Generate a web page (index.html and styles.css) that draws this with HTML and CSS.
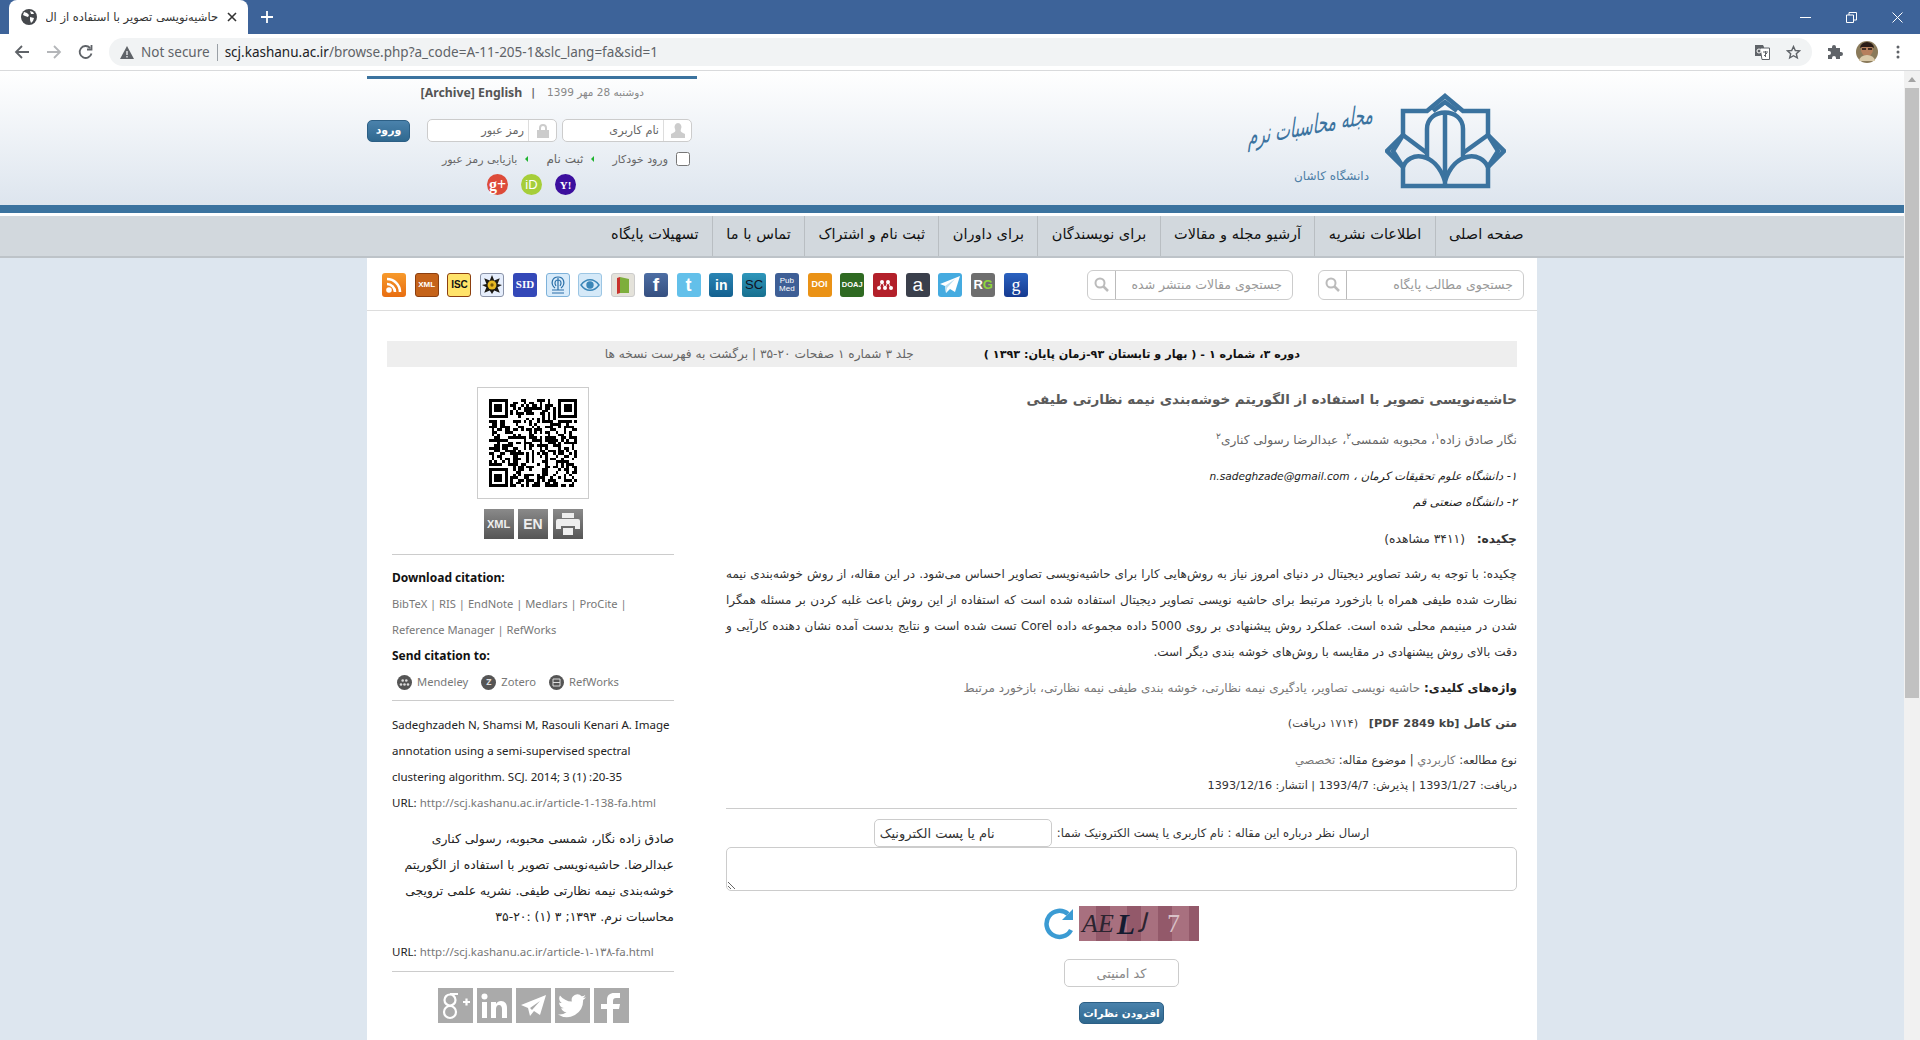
FILE: index.html
```html
<!DOCTYPE html>
<html lang="fa">
<head>
<meta charset="utf-8">
<title>حاشیه‌نویسی تصویر</title>
<link rel="stylesheet" href="styles.css">
</head>
<body>
<div class="tabstrip" dir="ltr">
    <div class="tab">
        <svg class="globe" width="16" height="16" viewBox="0 0 16 16"><circle cx="8" cy="8" r="8" fill="#45484c"/><path d="M3 3l3 1 2 2-1 2-3-1-2-1zM9 8l4 1-1 3-2 2-1-3zM9 2l3 1 1 2-3 0z" fill="#fff"/></svg>
        <span class="tab-title" dir="rtl">حاشیه‌نویسی تصویر با استفاده از ال</span>
        <svg width="10" height="10" viewBox="0 0 10 10"><path d="M1 1l8 8M9 1l-8 8" stroke="#333" stroke-width="1.6"/></svg>
    </div>
    <svg class="newtab" width="12" height="12" viewBox="0 0 12 12"><path d="M6 0v12M0 6h12" stroke="#fff" stroke-width="1.8"/></svg>
    <div class="winbtns">
        <svg width="11" height="11" viewBox="0 0 11 11"><path d="M0 5.5h11" stroke="#fff"/></svg>
        <svg width="11" height="11" viewBox="0 0 11 11"><path d="M.5 3h7v7.500h-7zM3 3V.5h7.500V8H8" fill="none" stroke="#fff"/></svg>
        <svg width="11" height="11" viewBox="0 0 11 11"><path d="M.5.5l10 10M10.500.5l-10 10" stroke="#fff"/></svg>
    </div>
</div>
<div class="toolbar" dir="ltr">
    <svg width="16" height="16" viewBox="0 0 16 16"><path d="M15 8H2M8 2L2 8l6 6" fill="none" stroke="#5f6368" stroke-width="1.800"/></svg>
    <svg width="16" height="16" viewBox="0 0 16 16"><path d="M1 8h13M8 2l6 6-6 6" fill="none" stroke="#b4b6b9" stroke-width="1.800"/></svg>
    <svg width="16" height="16" viewBox="0 0 16 16"><path d="M13.500 9.500A6 6 0 1 1 12 3.800M13.500 1v4.500H9" fill="none" stroke="#5f6368" stroke-width="1.800"/></svg>
    <div class="omnibox">
        <svg width="14" height="13" viewBox="0 0 14 13"><path d="M7 0l7 13H0z" fill="#5f6368"/><path d="M7 5v4M7 10v1.500" stroke="#f1f3f4" stroke-width="1.300"/></svg>
        <span class="insecure">Not secure</span>
        <span class="urlbar-sep"></span>
        <span class="url"><b>scj.kashanu.ac.ir</b>/browse.php?a_code=A-11-205-1&amp;slc_lang=fa&amp;sid=1</span>
        <svg class="translate" width="15" height="15" viewBox="0 0 15 15"><path d="M0 0h8l1 2v9H0z" fill="#5f6368"/><path d="M5 3h9.500v11.500H7z" fill="#fff" stroke="#5f6368"/><circle cx="4" cy="6" r="2" fill="none" stroke="#fff"/><path d="M8 7h5M10.500 6v6M9 11l3-3" stroke="#5f6368" fill="none"/></svg>
        <svg width="15" height="15" viewBox="0 0 15 15"><path d="M7.500 1.500l1.800 4 4.200.4-3.200 2.800 1 4.200-3.800-2.200-3.800 2.200 1-4.200L1.500 5.900l4.200-.4z" fill="none" stroke="#5f6368" stroke-width="1.400"/></svg>
    </div>
    <svg class="puzzle" width="16" height="16" viewBox="0 0 16 16"><path d="M1 4h4V3a2 2 0 0 1 4 0v1h4v4h1a2 2 0 0 1 0 4h-1v3H9v-1a2 2 0 0 0-4 0v1H1v-4h1a2 2 0 0 0 0-4H1z" fill="#5f6368"/></svg>
    <svg class="avatar" width="22" height="22" viewBox="0 0 22 22"><circle cx="11" cy="11" r="11" fill="#8a7a5a"/><circle cx="11" cy="9" r="6" fill="#b67f5c"/><path d="M4 7a7 6 0 0 1 14 0l-2-1H6z" fill="#2a1c16"/><path d="M6 8h4M12 8h4" stroke="#1d1512" stroke-width="1.400"/><path d="M3 20a8 6 0 0 1 16 0z" fill="#d9c9a8"/></svg>
    <svg class="dots" width="4" height="14" viewBox="0 0 4 14"><circle cx="2" cy="2" r="1.500" fill="#5f6368"/><circle cx="2" cy="7" r="1.500" fill="#5f6368"/><circle cx="2" cy="12" r="1.500" fill="#5f6368"/></svg>
</div>
<div class="viewport">
    <div class="page" dir="rtl">
        <header class="masthead">
            <div class="masthead-in">
                <div class="brand">
                    <svg class="emblem" width="121" height="96" viewBox="0 0 121 96" fill="none" stroke="#3b739f" stroke-width="4.500"><path d="M60 3L78 18H103V42L119 58L103 74V93H18V74L2 58L18 42V18H42z"/><path d="M48 18L60 9L72 18M18 42L8 58L18 74M103 42L113 58L103 74"/><path d="M42 66V36C42 14 78 14 78 36V66M60 18V93"/><path d="M18 74C24 58 50 58 60 88C70 58 96 58 103 74"/><path d="M18 42L42 60M103 42L78 60"/></svg>
                    <div class="brand-text">
                        <div class="brand-name">مجله محاسبات نرم</div>
                        <div class="brand-sub">دانشگاه کاشان</div>
                    </div>
                </div>
                <div class="userbox">
                    <div class="topline">
                        <span class="today">دوشنبه 28 مهر 1399</span>
                        <span class="pipe">|</span>
                        <span class="langs" dir="ltr">[Archive] English</span>
                    </div>
                    <div class="loginrow">
                        <div class="field"><span class="field-ic"><svg width="14" height="15" viewBox="0 0 14 15"><path d="M7 0a3.500 4 0 0 1 3 6c-1 2 0 3 2 4l2 1v4H0v-4l2-1c2-1 3-2 2-4a3.500 4 0 0 1 3-6z" fill="#ccc"/></svg></span><span>نام کاربری</span></div>
                        <div class="field"><span class="field-ic"><svg width="12" height="14" viewBox="0 0 12 14"><path d="M3 6V4a3 3 0 0 1 6 0v2" fill="none" stroke="#ccc" stroke-width="2"/><path d="M0 6h12v8H0z" fill="#ccc"/></svg></span><span>رمز عبور</span></div>
                        <div class="btn login-btn">ورود</div>
                    </div>
                    <div class="linksrow">
                        <input type="checkbox">
                        <span>ورود خودکار</span>
                        <i class="arrow"></i><span class="signup">ثبت نام</span>
                        <i class="arrow"></i><span>بازیابی رمز عبور</span>
                    </div>
                    <div class="oauth">
                        <span class="round yahoo" dir="ltr">Y!</span>
                        <span class="round orcid" dir="ltr">iD</span>
                        <span class="round gplus" dir="ltr">g+</span>
                    </div>
                </div>
            </div>
        </header>
        <div class="stripe"></div>
        <nav class="mainnav">
            <div class="mainnav-in">
                <a class="navitem">صفحه اصلی</a>
                <a class="navitem">اطلاعات نشریه</a>
                <a class="navitem">آرشیو مجله و مقالات</a>
                <a class="navitem">برای نویسندگان</a>
                <a class="navitem">برای داوران</a>
                <a class="navitem">ثبت نام و اشتراک</a>
                <a class="navitem">تماس با ما</a>
                <a class="navitem">تسهیلات پایگاه</a>
            </div>
        </nav>
        <main class="sheet">
            <div class="toolrow">
                <div class="search"><span>جستجوی مطالب پایگاه</span><span class="search-ic"><svg width="15" height="15" viewBox="0 0 15 15"><circle cx="6" cy="6" r="4.500" fill="none" stroke="#bbb" stroke-width="2"/><path d="M9.500 9.500l4.500 4.500" stroke="#bbb" stroke-width="2.500"/></svg></span></div>
                <div class="search"><span>جستجوی مقالات منتشر شده</span><span class="search-ic"><svg width="15" height="15" viewBox="0 0 15 15"><circle cx="6" cy="6" r="4.500" fill="none" stroke="#bbb" stroke-width="2"/><path d="M9.500 9.500l4.500 4.500" stroke="#bbb" stroke-width="2.500"/></svg></span></div>
                <div class="badges" dir="ltr">
                    <span class="badge b-rss"><svg width="18" height="18" viewBox="0 0 18 18" fill="none" stroke="#fff" stroke-width="2.600"><circle cx="4" cy="14" r="1.500" fill="#fff"/><path d="M2 8a8 8 0 0 1 8 8M2 3a13 13 0 0 1 13 13"/></svg></span>
                    <span class="badge b-xml">XML</span>
                    <span class="badge b-isc">ISC</span>
                    <span class="badge b-star"><svg width="20" height="20" viewBox="0 0 18 18"><path d="M9 0l2 5 5-2-2 5 4 1-4 2 2 5-5-2-2 3-2-3-5 2 2-5-4-2 4-1-2-5 5 2z" fill="#1c1a14"/><circle cx="9" cy="9" r="4" fill="#e6b820"/><circle cx="9" cy="9" r="1.500" fill="#7a5a08"/></svg></span>
                    <span class="badge b-sid">SID</span>
                    <span class="badge b-ring"><svg width="18" height="20" viewBox="0 0 18 20" fill="none" stroke="#2a6fa8" stroke-width="1.200"><path d="M6 13C1 9 3 2 9 2s8 7 3 11M7 11C5 8 6 5 9 5s4 3 2 6M9 3v12M3 15h12M3 18h12"/></svg></span>
                    <span class="badge b-eye"><svg width="20" height="12" viewBox="0 0 20 12" fill="none" stroke="#3a86b8" stroke-width="1.400"><path d="M1 6c5-7 13-7 18 0-5 7-13 7-18 0z"/><circle cx="10" cy="6" r="3" fill="#3a86b8"/></svg></span>
                    <span class="badge b-book"><svg width="16" height="20" viewBox="0 0 16 20"><path d="M2 3l3-1v16l-3 1z" fill="#c8322c"/><path d="M5 2l9 2v14l-9 0z" fill="#7dae3c"/></svg></span>
                    <span class="badge b-fb">f</span>
                    <span class="badge b-tw">t</span>
                    <span class="badge b-in">in</span>
                    <span class="badge b-sc">SC</span>
                    <span class="badge b-pm">Pub<br>Med</span>
                    <span class="badge b-doi">DOI</span>
                    <span class="badge b-doaj">DOAJ</span>
                    <span class="badge b-men"><svg width="18" height="12" viewBox="0 0 18 12"><path d="M3 9l3-6 3 6 3-6 3 6" fill="none" stroke="#fff"/><g fill="#fff"><circle cx="3" cy="9" r="2"/><circle cx="9" cy="9" r="2"/><circle cx="15" cy="9" r="2"/><circle cx="6" cy="3" r="2"/><circle cx="12" cy="3" r="2"/></g></svg></span>
                    <span class="badge b-a">a</span>
                    <span class="badge b-tg"><svg width="20" height="18" viewBox="0 0 20 18"><path d="M20 0L0 8l5 2 1 7 4-4 5 3z" fill="#fff"/><path d="M5 10l10-7-8 9-1 5z" fill="#bcdff0"/></svg></span>
                    <span class="badge b-rg">R<em>G</em></span>
                    <span class="badge b-gs">g</span>
                </div>
            </div>
            <div class="content">
                <div class="issuebar">
                    <b>دوره ۳، شماره ۱ - ( بهار و تابستان ۹۳-زمان پایان: ۱۳۹۳ )</b>
                    <span>جلد ۳ شماره ۱ صفحات ۲۰-۳۵ | برگشت به فهرست نسخه ها</span>
                </div>
                <div class="columns">
                    <article class="article">
                        <h1 class="title">حاشیه‌نویسی تصویر با استفاده از الگوریتم خوشه‌بندی نیمه نظارتی طیفی</h1>
                        <p class="authors">نگار صادق زاده<sup>۱</sup>، محبوبه شمسی<sup>۲</sup>، عبدالرضا رسولی کناری<sup>۲</sup></p>
                        <p class="affil">۱- دانشگاه علوم تحقیقات کرمان ، <span class="email" dir="ltr">n.sadeghzade@gmail.com</span></p>
                        <p class="affil">۲- دانشگاه صنعتی قم</p>
                        <p class="abshead"><b>چکیده:</b> &nbsp; (۳۴۱۱ مشاهده)</p>
                        <p class="abstract">چکیده: با توجه به رشد تصاویر دیجیتال در دنیای امروز نیاز به روش‌هایی کارا برای حاشیه‌نویسی تصاویر احساس می‌شود. در این مقاله، از روش خوشه‌بندی نیمه نظارت شده طیفی همراه با بازخورد مرتبط برای حاشیه نویسی تصاویر دیجیتال استفاده شده است که استفاده از این روش باعث غلبه کردن بر مسئله همگرا شدن در مینیمم محلی شده است. عملکرد روش پیشنهادی بر روی 5000 داده مجموعه داده Corel تست شده است و نتایج بدست آمده نشان دهنده کارآیی و دقت بالای روش پیشنهادی در مقایسه با روش‌های خوشه بندی دیگر است.</p>
                        <p class="keywords"><b>واژه‌های کلیدی:</b> حاشیه نویسی تصاویر، یادگیری نیمه نظارتی، خوشه بندی طیفی نیمه نظارتی، بازخورد مرتبط</p>
                        <p class="fulltext"><b>متن کامل <span dir="ltr">[PDF 2849 kb]</span></b> &nbsp; (۱۷۱۴ دریافت)</p>
                        <p class="meta">نوع مطالعه: <span class="muted">کاربردي</span> | موضوع مقاله: <span class="muted">تخصصي</span></p>
                        <p class="meta">دریافت: 1393/1/27 | پذیرش: 1393/4/7 | انتشار: 1393/12/16</p>
                        <hr class="rule">
                        <form class="comment">
                            <div class="comment-head"><span>ارسال نظر درباره این مقاله : نام کاربری یا پست الکترونیک شما:</span><input class="namebox" value="نام یا پست الکترونیک"></div>
                            <textarea class="commentbox"></textarea>
                            <div class="captcha">
                                <div class="captcha-img" dir="ltr"><span>AE</span><b>L</b><span>ﻟ</span><i>7</i></div>
                                <svg width="32" height="32" viewBox="0 0 32 32" fill="none"><path d="M27 22A13 13 0 1 1 24 6" stroke="#3b9bd3" stroke-width="4.500"/><path d="M29 1v11H18z" fill="#3b9bd3"/></svg>
                            </div>
                            <input class="codebox" placeholder="کد امنیتی">
                            <div class="btn send-btn">افزودن نظرات</div>
                        </form>
                    </article>
                    <aside class="side" dir="ltr">
                        <div class="qr" id="qr"></div>
                        <div class="exports">
                            <span class="exp">XML</span>
                            <span class="exp en">EN</span>
                            <span class="exp"><svg width="24" height="22" viewBox="0 0 24 22"><path d="M6 0h12v5H6zM7 15h10v7H7z" fill="#eee"/><path d="M2 6h20a2 2 0 0 1 2 2v8h-5v-3H5v3H0V8a2 2 0 0 1 2-2z" fill="#eee"/></svg></span>
                        </div>
                        <hr class="rule rule-a">
                        <div class="s-head s-first">Download citation:</div>
                        <div class="s-line muted cite-links">BibTeX | RIS | EndNote | Medlars | ProCite |</div>
                        <div class="s-line muted cite-links">Reference Manager | RefWorks</div>
                        <div class="s-head">Send citation to:</div>
                        <div class="s-line refs muted">
                            <span class="dot"><svg width="11" height="7" viewBox="0 0 11 7" fill="#ddd"><circle cx="2" cy="5.500" r="1.300"/><circle cx="5.500" cy="5.500" r="1.300"/><circle cx="9" cy="5.500" r="1.300"/><circle cx="3.700" cy="1.500" r="1.300"/><circle cx="7.300" cy="1.500" r="1.300"/></svg></span><span>Mendeley</span>
                            <span class="dot">Z</span><span>Zotero</span>
                            <span class="dot"><svg width="9" height="9" viewBox="0 0 9 9" fill="none" stroke="#ddd"><path d="M1 1h7v7H1zM1 4.500h7"/></svg></span><span>RefWorks</span>
                        </div>
                        <hr class="rule rule-b">
                        <div class="s-line s-first2">Sadeghzadeh N, Shamsi M, Rasouli Kenari A. Image annotation using a semi-supervised spectral clustering algorithm. SCJ. 2014; 3 (1) :20-35</div>
                        <div class="s-line">URL: <span class="muted">http://scj.kashanu.ac.ir/article-1-138-fa.html</span></div>
                        <div class="s-cite" dir="rtl">صادق زاده نگار، شمسی محبوبه، رسولی کناری عبدالرضا. حاشیه‌نویسی تصویر با استفاده از الگوریتم خوشه‌بندی نیمه نظارتی طیفی. نشریه علمی ترویجی محاسبات نرم. ۱۳۹۳; ۳ (۱) :۲۰-۳۵</div>
                        <div class="s-line">URL: <span class="muted">http://scj.kashanu.ac.ir/article-۱-۱۳۸-fa.html</span></div>
                        <hr class="rule rule-c">
                        <div class="shares">
                            <span class="share"><svg width="30" height="28" viewBox="0 0 30 28" fill="none" stroke="#fff" stroke-width="2.200"><circle cx="10" cy="8" r="5.500"/><circle cx="10" cy="20" r="6"/><path d="M10 2h8M23 10h7M26.500 6.500v7" /></svg></span>
                            <span class="share"><svg width="26" height="26" viewBox="0 0 26 26" fill="#fff"><path d="M1 9h5v16H1zM10 9h5v2c1-2 3-3 5-3 4 0 6 3 6 7v10h-5v-9c0-2-1-4-3-4s-3 2-3 4v9h-5z"/><circle cx="3.500" cy="3.500" r="3"/></svg></span>
                            <span class="share"><svg width="26" height="24" viewBox="0 0 26 24"><path d="M26 1L1 11l7 3 2 8 4-5 6 4zM10 14l10-7-8 9z" fill="#fff" fill-rule="evenodd"/></svg></span>
                            <span class="share"><svg width="28" height="24" viewBox="0 0 24 20"><path d="M24 2.400c-.9.400-1.800.7-2.800.8 1-.6 1.800-1.600 2.200-2.700-1 .6-2 1-3.100 1.200A4.900 4.900 0 0 0 11.900 6.200C7.800 6 4.200 4 1.700.9c-1.300 2.200-.7 5.100 1.500 6.600-.8 0-1.600-.2-2.200-.6 0 2.300 1.600 4.400 3.900 4.900-.7.200-1.500.2-2.200.1.600 2 2.500 3.400 4.600 3.400A9.900 9.900 0 0 1 0 17.300 14 14 0 0 0 21.500 4.900c1-.7 1.800-1.500 2.500-2.500z" fill="#fff"/></svg></span>
                            <span class="share share-f"><svg width="20" height="30" viewBox="0 0 20 30"><path d="M6 30V16H0v-5h6V7c0-5 3-7 7-7h6v5h-4c-2 0-3 1-3 3v3h7l-1 5h-6v14z" fill="#fff"/></svg></span>
                        </div>
                    </aside>
                </div>
            </div>
        </main>
    </div>
    <div class="scrollbar" dir="ltr">
        <span class="sb-up"></span>
        <div class="sb-thumb"></div>
    </div>
</div>
<script>
// fake qr pattern, seeded so every run is the same
var qr = document.getElementById('qr')
var n = 33, seed = 7
var s = ''
function finder(x, y) {
    var dx = x < 7 ? x : (x >= n - 7 ? x - n + 7 : -1)
    var dy = y < 7 ? y : (y >= n - 7 ? y - n + 7 : -1)
    if (dx < 0 || dy < 0) return null
    if (x >= n - 7 && y >= n - 7) return null
    return dx == 0 || dx == 6 || dy == 0 || dy == 6 || (dx > 1 && dx < 5 && dy > 1 && dy < 5)
}
for (var y = 0; y < n; y++) {
    for (var x = 0; x < n; x++) {
        seed = (seed * 1103515245 + 12345) % 2147483648
        var f = finder(x, y)
        var on = f === null ? (seed >> 16) % 2 == 0 : f
        var nearFinder = f === null && ((x < 8 && y < 8) || (x >= n - 8 && y < 8) || (x < 8 && y >= n - 8))
        if (nearFinder) on = false
        s += '<i' + (on ? ' class="on"' : '') + '></i>'
    }
}
qr.innerHTML = s
</script>
</body>
</html>
```

FILE: styles.css
```css
html, body {
    height: 100%;
    margin: 0;
    overflow: hidden;
}
body {
    font-family: "DejaVu Sans", sans-serif;
    font-size: 10px;
    color: #222;
    background: #fff;
}
p {
    margin: 0;
}

/* browser chrome */
.tabstrip {
    height: 34px;
    background: #3d6399;
    display: flex;
    align-items: flex-end;
    padding-left: 9px;
}
.tab {
    width: 239px;
    height: 34px;
    box-sizing: border-box;
    background: #fff;
    border-radius: 8px 8px 0 0;
    display: flex;
    align-items: center;
    padding: 0 11px 0 12px;
    gap: 9px;
}
.tab-title {
    flex: 1;
    font-size: 11.500px;
    white-space: nowrap;
    overflow: hidden;
    color: #333;
}
.newtab {
    margin: 0 0 11px 13px;
}
.winbtns {
    margin-left: auto;
    display: flex;
    gap: 35px;
    padding: 0 17px 11px 0;
}
.toolbar {
    height: 36px;
    display: flex;
    align-items: center;
    gap: 16px;
    padding: 0 20px 0 14px;
    border-bottom: 1px solid #d9dadc;
}
.omnibox {
    flex: 1;
    height: 28px;
    border-radius: 14px;
    background: #f1f3f4;
    margin: 0 -1px 0 -1px;
    display: flex;
    align-items: center;
    padding: 0 11px;
    gap: 7px;
    font-family: "Noto Sans", sans-serif;
    font-size: 13.500px;
    color: #5f6368;
}
.urlbar-sep {
    width: 1px;
    height: 17px;
    background: #9aa0a6;
}
.url {
    flex: 1;
}
.url b {
    font-weight: 400;
    color: #202124;
}
.translate {
    margin-right: 9px;
}
.avatar {
    margin-left: -3px;
}
.dots {
    margin-left: 2px;
}

/* page */
.viewport {
    display: flex;
    height: 969px;
    overflow: hidden;
}
.page {
    flex: 1;
    min-width: 0;
    background: #dde6ef;
}
.masthead {
    height: 134px;
    background: linear-gradient(#fff, #dde5ee);
}
.masthead-in {
    width: 1170px;
    margin: 0 auto;
    display: flex;
    justify-content: space-between;
    height: 100%;
}
.brand {
    display: flex;
    align-items: flex-start;
    gap: 12px;
    padding: 22px 31px 0 0;
}
.brand-text {
    width: 128px;
}
.brand-name {
    font-style: italic;
    font-size: 27px;
    color: #3b739f;
    white-space: nowrap;
    height: 48px;
    padding-top: 5px;
    transform: scaleX(.58) skewY(-6deg);
    transform-origin: right center;
}
.brand-sub {
    font-size: 12px;
    color: #4d7ea6;
    margin-top: 23px;
    padding-right: 4px;
}
.userbox {
    width: 330px;
    margin-top: 5px;
    border-top: 3px solid #3b739f;
    height: 126px;
    padding-top: 3px;
    color: #666;
    display: flex;
    flex-direction: column;
}
.topline {
    display: flex;
    align-items: center;
    padding-right: 53px;
    height: 20px;
    font-size: 10.500px;
    color: #888;
}
.langs {
    font-family: "Noto Sans", sans-serif;
    font-weight: 700;
    font-size: 12.300px;
    color: #555;
}
.pipe {
    font-weight: 700;
    color: #666;
    margin: 0 12px 0 9px;
}
.loginrow {
    display: flex;
    align-items: center;
    margin-top: 17px;
    padding-right: 5px;
}
.field {
    width: 130px;
    height: 23px;
    box-sizing: border-box;
    border: 1px solid #ccc;
    border-radius: 5px;
    background: #fff;
    display: flex;
    align-items: center;
    font-size: 11.300px;
    color: #666;
    margin-left: 5px;
}
.field-ic {
    width: 27px;
    height: 100%;
    border-left: 1px solid #ddd;
    display: flex;
    align-items: center;
    justify-content: center;
    margin-left: 4px;
}
.btn {
    display: flex;
    align-items: center;
    justify-content: center;
    box-sizing: border-box;
    background: linear-gradient(#4a82ac, #2f688f);
    border: 1px solid #2c5f85;
    border-radius: 5px;
    color: #fff;
    font-weight: 700;
}
.login-btn {
    width: 43px;
    height: 22px;
    font-size: 11px;
    margin-right: 12px;
}
.linksrow {
    display: flex;
    align-items: center;
    height: 14px;
    margin-top: 10px;
    padding-right: 7px;
    font-size: 11px;
    color: #666;
    white-space: nowrap;
}
.linksrow input {
    margin: 0 0 0 8px;
    width: 14px;
    height: 14px;
}
.signup {
    font-size: 12px;
}
.arrow {
    width: 0;
    height: 0;
    border: 3.500px solid transparent;
    border-right-color: #1fb32f;
    border-left-width: 0;
    margin: 0 18px 0 8px;
}
.oauth {
    display: flex;
    gap: 13px;
    padding-right: 121px;
    margin-top: 8px;
}
.round {
    width: 21px;
    height: 21px;
    border-radius: 50%;
    display: flex;
    align-items: center;
    justify-content: center;
    color: #fff;
    font-family: "Liberation Serif", serif;
    font-weight: 700;
    font-size: 11px;
}
.yahoo { background: #3c0f9e; }
.orcid { background: #a6ce39; font-family: "Liberation Sans", sans-serif; font-weight: 400; font-size: 13px; }
.gplus { background: #dd4b39; font-size: 16px; }
.stripe {
    height: 8px;
    background: #3b739f;
    border-bottom: 3px solid #fff;
}
.mainnav {
    height: 42px;
    box-sizing: border-box;
    background: #d2d8dd;
    border-bottom: 2px solid #bdc3c8;
}
.mainnav-in {
    width: 1170px;
    margin: 0 auto;
    display: flex;
    height: 100%;
}
.navitem {
    font-size: 14.500px;
    color: #111;
    display: flex;
    align-items: center;
    padding: 0 13.400px 4px;
    border-left: 1px solid #b9bec2;
    white-space: nowrap;
}
.navitem:last-child {
    border-left: 0;
}
.sheet {
    width: 1170px;
    margin: 0 auto;
    background: #fff;
    height: 800px;
}
.toolrow {
    height: 52px;
    display: flex;
    align-items: center;
    gap: 25px;
    padding: 0 13px 0 15px;
    border-bottom: 1px solid #ddd;
}
.search {
    width: 206px;
    height: 30px;
    box-sizing: border-box;
    border: 1px solid #ccc;
    border-radius: 6px;
    display: flex;
    align-items: center;
    justify-content: space-between;
    padding-right: 10px;
    font-size: 12.500px;
    color: #999;
    white-space: nowrap;
    margin-top: 1px;
}
.search-ic {
    width: 27px;
    height: 100%;
    border-right: 1px solid #bbb;
    display: flex;
    align-items: center;
    justify-content: center;
}
.badges {
    width: 646px;
    margin-right: auto;
    display: flex;
    justify-content: space-between;
    margin-top: 1px;
}
.badge {
    width: 24px;
    height: 24px;
    border-radius: 3px;
    display: flex;
    align-items: center;
    justify-content: center;
    text-align: center;
    color: #fff;
    font-family: "Liberation Sans", sans-serif;
    font-weight: 700;
    font-size: 11px;
    line-height: 1;
    box-sizing: border-box;
}
.b-rss { background: linear-gradient(#f79a2c, #e86d10); }
.b-xml { background: #c5631a; border: 1px solid #8c3f10; font-size: 8px; }
.b-isc { background: #ffe36a; color: #111; border: 1px solid #8c3f10; font-size: 10px; }
.b-star { background: #e6eefc; border: 1px solid #8a93a8; }
.b-sid { background: #3448b8; font-family: "Liberation Serif", serif; font-size: 11px; }
.b-ring { background: #d8ebfa; border: 1px solid #7eb2da; }
.b-eye { background: #d5e9f8; border: 1px solid #9cc6e4; }
.b-book { background: #e4e2da; border: 1px solid #ccc; }
.b-fb { background: linear-gradient(#4d6ea4, #354f80); font-size: 19px; }
.b-tw { background: #63c0ea; font-size: 18px; }
.b-in { background: linear-gradient(#2a85b4, #13608f); font-size: 14px; }
.b-sc { background: linear-gradient(#2e96bb, #17708f); color: #112; font-size: 13px; font-weight: 400; }
.b-pm { background: #3e5f96; font-size: 8px; font-weight: 400; }
.b-doi { background: #ea9216; font-size: 9px; }
.b-doaj { background: #2f6a22; font-size: 7.500px; }
.b-men { background: #b3202a; }
.b-a { background: #3a3f4b; font-size: 19px; font-weight: 400; }
.b-tg { background: #45abe0; }
.b-rg { background: #6e6e6e; font-size: 13px; }
.b-rg em { color: #8fd63a; font-style: normal; }
.b-gs { background: linear-gradient(#2a62c0, #153a90); font-family: "Liberation Serif", serif; font-size: 18px; font-weight: 400; }
.content {
    padding: 30px 20px 0 20px;
}
.issuebar {
    height: 26px;
    background: #eee;
    display: flex;
    align-items: center;
    padding-right: 217px;
    gap: 70px;
    font-size: 12.200px;
    color: #666;
    white-space: nowrap;
}
.issuebar b {
    color: #111;
    font-size: 11.200px;
}
.columns {
    display: flex;
    justify-content: space-between;
}
.article {
    width: 791px;
    padding-top: 21px;
    color: #333;
}
.title {
    margin: 0;
    font-size: 13.500px;
    font-weight: 700;
    color: #5a5a5a;
    line-height: 22px;
}
.authors {
    margin-top: 21px;
    font-size: 12.150px;
    line-height: 18px;
    color: #666;
}
.authors sup {
    font-size: 9px;
    line-height: 0;
}
.affil {
    margin-top: 10px;
    font-size: 11.500px;
    font-style: italic;
    color: #222;
    line-height: 16px;
}
.authors + .affil {
    margin-top: 19px;
}
.email {
    font-size: 10.600px;
}
.abshead {
    margin-top: 20px;
    font-size: 12.300px;
    line-height: 18px;
    color: #333;
}
.abstract {
    margin-top: 13px;
    font-size: 12px;
    line-height: 26px;
    text-align: justify;
    color: #333;
}
.keywords {
    margin-top: 15px;
    color: #777;
    font-size: 12px;
    line-height: 16px;
}
.keywords b {
    color: #222;
}
.fulltext {
    margin-top: 20px;
    font-size: 11.300px;
    line-height: 16px;
    color: #444;
}
.meta {
    margin-top: 20px;
    font-size: 11.500px;
    line-height: 16px;
    color: #333;
}
.meta + .meta {
    margin-top: 10px;
    font-size: 11.200px;
}
.muted {
    color: #777;
}
.rule {
    border: 0;
    border-top: 1px solid #ccc;
    margin: 14px 0 0;
}
.comment {
    display: flex;
    flex-direction: column;
    align-items: center;
}
.comment-head {
    display: flex;
    align-items: center;
    gap: 5px;
    font-size: 11.600px;
    color: #333;
    margin-top: 10px;
    white-space: nowrap;
}
.namebox {
    width: 178px;
    height: 28px;
    box-sizing: border-box;
    border: 1px solid #ccc;
    border-radius: 5px;
    font: 13px "DejaVu Sans", sans-serif;
    padding: 0 5px;
    color: #333;
    text-align: left;
    direction: rtl;
}
.commentbox {
    width: 100%;
    height: 44px;
    box-sizing: border-box;
    border: 1px solid #ccc;
    border-radius: 5px;
    margin: 0;
    display: block;
}
.captcha {
    display: flex;
    align-items: center;
    gap: 3px;
    margin-top: 15px;
}
.captcha-img {
    width: 120px;
    height: 35px;
    background: repeating-linear-gradient(90deg, #a8707f 0 17px, #93596a 17px 31px);
    display: flex;
    align-items: center;
    gap: 3px;
    padding-left: 3px;
    box-sizing: border-box;
    font-family: "Liberation Serif", serif;
    font-style: italic;
    font-size: 26px;
    color: #2c2430;
}
.captcha-img b {
    color: #141b30;
    font-size: 30px;
}
.captcha-img i {
    color: #d9c2c8;
    font-style: normal;
    margin-left: 18px;
}
.codebox {
    width: 115px;
    height: 28px;
    box-sizing: border-box;
    border: 1px solid #ccc;
    border-radius: 5px;
    margin-top: 18px;
    font: 12.900px "DejaVu Sans", sans-serif;
    text-align: center;
    direction: rtl;
}
.codebox::placeholder {
    color: #888;
}
.send-btn {
    width: 85px;
    height: 22px;
    margin-top: 15px;
    font-size: 10.500px;
}

/* left column */
.side {
    width: 282px;
    margin-left: 5px;
    padding-top: 20px;
    font-family: "Noto Sans", sans-serif;
    font-size: 11.500px;
    color: #222;
}
.qr {
    width: 112px;
    height: 112px;
    box-sizing: border-box;
    padding: 11px;
    border: 1px solid #ccc;
    margin: 0 auto;
    display: grid;
    grid-template-columns: repeat(33, 1fr);
    grid-template-rows: repeat(33, 1fr);
}
.qr i.on {
    background: #000;
}
.exports {
    display: flex;
    justify-content: center;
    gap: 4.500px;
    margin-top: 10px;
}
.exp {
    width: 30px;
    height: 30px;
    background: linear-gradient(#8a8a8a, #555);
    color: #eee;
    font-family: "Liberation Sans", sans-serif;
    font-weight: 700;
    font-size: 11px;
    display: flex;
    align-items: center;
    justify-content: center;
}
.exp.en {
    font-size: 14px;
}
.rule-a {
    margin-top: 15px;
}
.rule-b {
    margin-top: 5px;
}
.rule-c {
    margin-top: 6px;
}
.s-head {
    font-weight: 700;
    color: #111;
    font-size: 12px;
    line-height: 26px;
}
.s-first {
    margin-top: 10px;
}
.s-line {
    line-height: 26px;
}
.s-first2 {
    margin-top: 11px;
}
.cite-links {
    font-size: 11.150px;
}
.refs {
    display: flex;
    align-items: center;
    padding-left: 5px;
    font-size: 11.200px;
}
.refs span + .dot {
    margin-left: 13px;
}
.dot {
    display: flex;
    width: 15px;
    height: 15px;
    border-radius: 50%;
    background: #555;
    color: #ddd;
    align-items: center;
    justify-content: center;
    font-size: 9px;
    font-weight: 700;
    margin-right: 5px;
}
.s-cite {
    margin-top: 10px;
    font-family: "DejaVu Sans", sans-serif;
    font-size: 12.400px;
    line-height: 26px;
}
.s-cite + .s-line {
    margin-top: 9px;
}
.shares {
    display: flex;
    justify-content: center;
    gap: 4px;
    margin-top: 16px;
}
.share {
    width: 35px;
    height: 35px;
    background: #aaa;
    display: flex;
    align-items: center;
    justify-content: center;
    overflow: hidden;
}
.share-f {
    align-items: flex-end;
}

/* scrollbar */
.scrollbar {
    width: 16px;
    background: #f1f1f1;
    display: flex;
    flex-direction: column;
    align-items: center;
    flex-shrink: 0;
}
.sb-up {
    width: 0;
    height: 0;
    border: 4px solid transparent;
    border-top: 0;
    border-bottom: 5px solid #a3a3a3;
    margin: 6px 0 6px;
}
.sb-thumb {
    width: 14px;
    height: 610px;
    background: #c1c1c1;
}
```
